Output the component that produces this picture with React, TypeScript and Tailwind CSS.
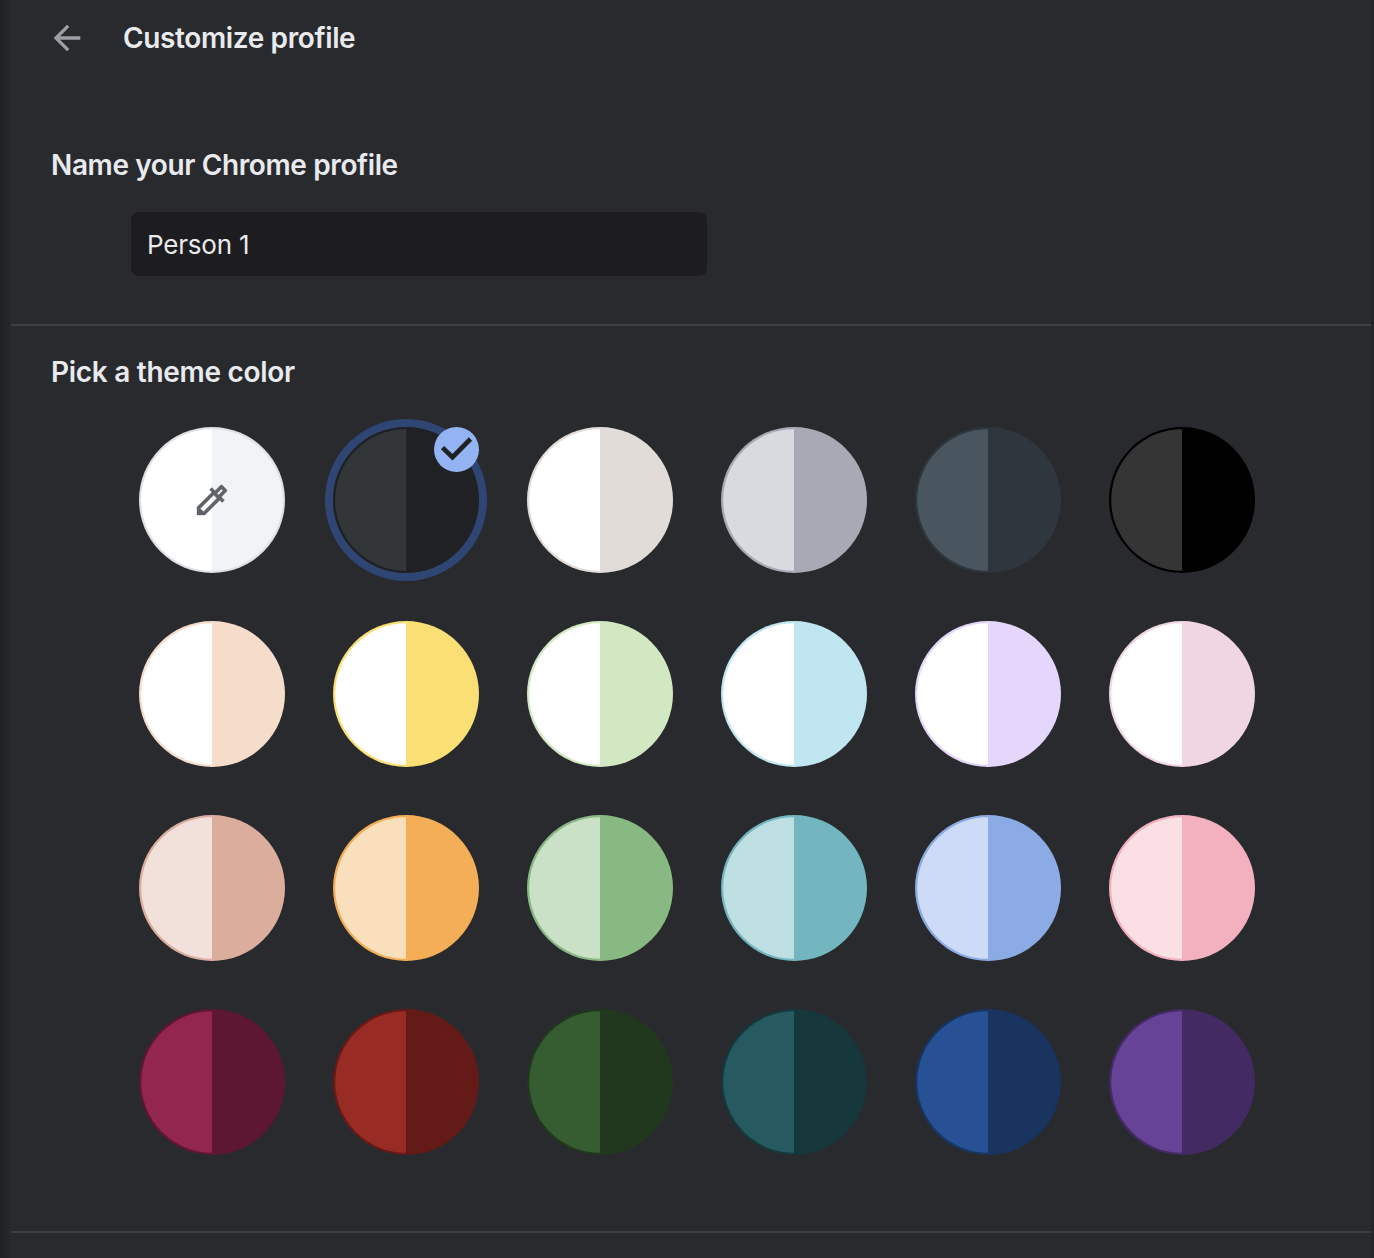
import React from 'react';

type Swatch = { left: string; right: string; ring?: string };

const swatches: Swatch[] = [
  { left: '#ffffff', right: '#f1f3f4', ring: '#dfe0e3' },
  { left: '#323639', right: '#202124' },
  { left: '#ffffff', right: '#e2dcd8' },
  { left: '#d9dadf', right: '#a8a9b5' },
  { left: '#49565f', right: '#2e363e' },
  { left: '#353535', right: '#000000' },
  { left: '#ffffff', right: '#f6dccb' },
  { left: '#ffffff', right: '#f9df74' },
  { left: '#ffffff', right: '#d2e8c3' },
  { left: '#ffffff', right: '#c0e6f1' },
  { left: '#ffffff', right: '#e5d6fc' },
  { left: '#ffffff', right: '#f0d6e2' },
  { left: '#f2e1db', right: '#dbad9d' },
  { left: '#fadfbd', right: '#f3ae57' },
  { left: '#cae0c7', right: '#89b983' },
  { left: '#bee0e2', right: '#73b6c0' },
  { left: '#cddbf6', right: '#8cabe5' },
  { left: '#fae0e4', right: '#f3b0be' },
  { left: '#93264d', right: '#5d1732' },
  { left: '#992b25', right: '#641b18' },
  { left: '#355d31', right: '#21381f' },
  { left: '#265a60', right: '#16383c' },
  { left: '#275194', right: '#19345f' },
  { left: '#674398', right: '#432a62' },
];

function SwatchCircle({ left, right, ring }: Swatch) {
  return (
    <svg viewBox="0 0 146 146" className="block size-[146px]">
      <circle cx="73" cy="73" r="73" fill={ring ?? right} />
      <circle cx="73" cy="73" r="70.8" fill={right} />
      <path d="M73 2.2A70.8 70.8 0 0 0 73 143.8Z" fill={left} />
    </svg>
  );
}

function PipetteIcon() {
  return (
    <svg
      viewBox="0 0 24 24"
      className="absolute left-[53px] top-[53px] size-10"
      fill="#5f6368"
      stroke="#5f6368"
      strokeWidth="0.2"
    >
      <path d="M17.66 5.41l.92.92-2.69 2.69-.92-.92 2.69-2.69M17.67 3c-.26 0-.51.1-.71.29l-3.12 3.12-1.93-1.91-1.41 1.41 1.42 1.42L3 16.25V21h4.75l8.92-8.92 1.42 1.42 1.41-1.41-1.92-1.92 3.12-3.12c.4-.4.4-1.03.01-1.42l-2.34-2.34c-.2-.19-.45-.29-.7-.29zM6.92 19L5 17.08l8.06-8.06 1.92 1.92L6.92 19z" />
    </svg>
  );
}

function CheckBadge() {
  return (
    <span className="absolute right-0 top-0 size-[45px] rounded-full bg-[#94b3f3]">
      <svg viewBox="0 0 45 45" className="block size-[45px]" fill="none">
        <path d="M8.5 20.6 18.5 30.2 36.5 12" stroke="#202124" strokeWidth="4.7" />
      </svg>
    </span>
  );
}

export default function App() {
  return (
    <div className="flex h-[1258px] w-[1374px] overflow-hidden bg-[#292a2d] font-['Inter',sans-serif] text-[#e8eaed]">
      <div className="w-[11px] shrink-0 bg-linear-to-r from-[#202124] to-[#27282b]" />
      <main className="flex w-[1360px] shrink-0 flex-col">
        <header className="flex h-[76px] items-center pl-9">
          <button className="size-10" aria-label="Back">
            <svg viewBox="0 0 24 24" className="size-10" fill="#9aa0a6">
              <path d="M20 11H7.83l5.59-5.59L12 4l-8 8 8 8 1.41-1.41L7.83 13H20v-2z" />
            </svg>
          </button>
          <h1 className="ml-9 text-[28px] leading-10 font-semibold tracking-[-0.37px]">Customize profile</h1>
        </header>

        <section className="flex h-[248px] flex-col pt-[69px] pl-10">
          <h2 className="text-[28px] leading-10 font-semibold tracking-[-0.38px]">Name your Chrome profile</h2>
          <div className="mt-[27px] ml-20 flex h-16 w-[576px] items-center rounded-lg bg-[#1d1d1f] px-4 text-[26px] tracking-[-0.2px]">
            <span>Person 1</span>
          </div>
        </section>

        <section className="flex h-[909px] shrink-0 flex-col border-y-2 border-[#3d3f42] pt-[26px]">
          <h2 className="pl-10 text-[28px] leading-10 font-semibold tracking-[-0.29px]">Pick a theme color</h2>
          <div className="mt-[35px] ml-32 grid grid-cols-[repeat(6,146px)] gap-12">
            {swatches.map((swatch, i) => (
              <div
                key={i}
                className={i === 1 ? 'relative size-[146px] rounded-full ring-8 ring-[#2f4674]' : 'relative size-[146px]'}
              >
                <SwatchCircle {...swatch} />
                {i === 0 && <PipetteIcon />}
                {i === 1 && <CheckBadge />}
              </div>
            ))}
          </div>
        </section>
      </main>
      <div className="w-[3px] shrink-0 bg-[#242528]" />
    </div>
  );
}
